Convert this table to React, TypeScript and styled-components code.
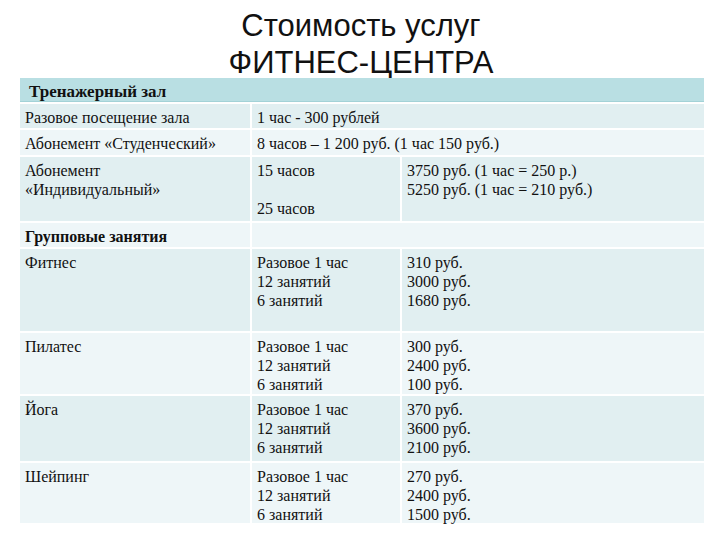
import React from "react";
import styled, { createGlobalStyle } from "styled-components";

const GlobalStyle = createGlobalStyle`
  html, body {
    margin: 0;
    padding: 0;
    background: #ffffff;
  }
  body {
    width: 720px;
    height: 540px;
    overflow: hidden;
  }
`;

const Page = styled.div`
  width: 720px;
  height: 540px;
  display: flex;
  flex-flow: column;
  background: #ffffff;
`;

const Title = styled.h1`
  margin: 0;
  height: 78px;
  padding-top: 7px;
  padding-left: 2px;
  box-sizing: border-box;
  text-align: center;
  font-family: "Liberation Sans", Arial, sans-serif;
  font-weight: normal;
  font-size: 31px;
  line-height: 37px;
  color: #111111;
`;

const Table = styled.div`
  margin-left: 20px;
  width: 684px;
  display: grid;
  grid-template-columns: 230px 148px 302px;
  grid-template-rows: 24px 24px 25px 64px 24px 82px 61px 65px 60px;
  gap: 2px;
`;

type Tone = "head" | "dark" | "light";

const toneColors: Record<Tone, string> = {
  head: "#b9dfe3",
  dark: "#e1eff1",
  light: "#eef6f8",
};

const Cell = styled.div<{ $tone: Tone; $span?: number; $bold?: boolean }>`
  grid-column: span ${(p) => p.$span ?? 1};
  background: ${(p) => toneColors[p.$tone]};
  padding: 4px 5px 0;
  box-sizing: border-box;
  font-family: "Liberation Serif", "Times New Roman", serif;
  font-size: 16px;
  line-height: 19px;
  font-weight: ${(p) => (p.$bold ? "bold" : "normal")};
  color: #111111;
  white-space: pre-line;
`;

const HeadCell = styled(Cell)`
  border-bottom: 1px solid #a3d2d7;
  padding-left: 9px;
  font-size: 17px;
`;

const rows: { tone: Tone; cells: string[] }[] = [
  { tone: "dark", cells: ["Фитнес", "Разовое 1 час\n12 занятий\n6 занятий", "310 руб.\n3000 руб.\n1680 руб."] },
  { tone: "light", cells: ["Пилатес", "Разовое 1 час\n12 занятий\n6 занятий", "300 руб.\n2400 руб.\n100 руб."] },
  { tone: "dark", cells: ["Йога", "Разовое 1 час\n12 занятий\n6 занятий", "370 руб.\n3600 руб.\n2100 руб."] },
  { tone: "light", cells: ["Шейпинг", "Разовое 1 час\n12 занятий\n6 занятий", "270 руб.\n2400 руб.\n1500 руб."] },
];

export default function App() {
  return (
    <Page>
      <GlobalStyle />
      <Title>
        Стоимость услуг
        <br />
        ФИТНЕС-ЦЕНТРА
      </Title>
      <Table>
        <HeadCell $tone="head" $span={3} $bold>
          Тренажерный зал
        </HeadCell>

        <Cell $tone="dark">Разовое посещение зала</Cell>
        <Cell $tone="dark" $span={2}>
          1 час - 300 рублей
        </Cell>

        <Cell $tone="light">Абонемент «Студенческий»</Cell>
        <Cell $tone="light" $span={2}>
          8 часов – 1 200 руб. (1 час 150 руб.)
        </Cell>

        <Cell $tone="dark">{"Абонемент\n«Индивидуальный»"}</Cell>
        <Cell $tone="dark">{"15 часов\n\n25 часов"}</Cell>
        <Cell $tone="dark">{"3750 руб. (1 час = 250 р.)\n5250 руб. (1 час = 210 руб.)"}</Cell>

        <Cell $tone="light" $bold>
          Групповые занятия
        </Cell>
        <Cell $tone="light" $span={2} />

        {rows.map((row) =>
          row.cells.map((text, i) => (
            <Cell key={row.cells[0] + i} $tone={row.tone}>
              {text}
            </Cell>
          ))
        )}
      </Table>
    </Page>
  );
}
